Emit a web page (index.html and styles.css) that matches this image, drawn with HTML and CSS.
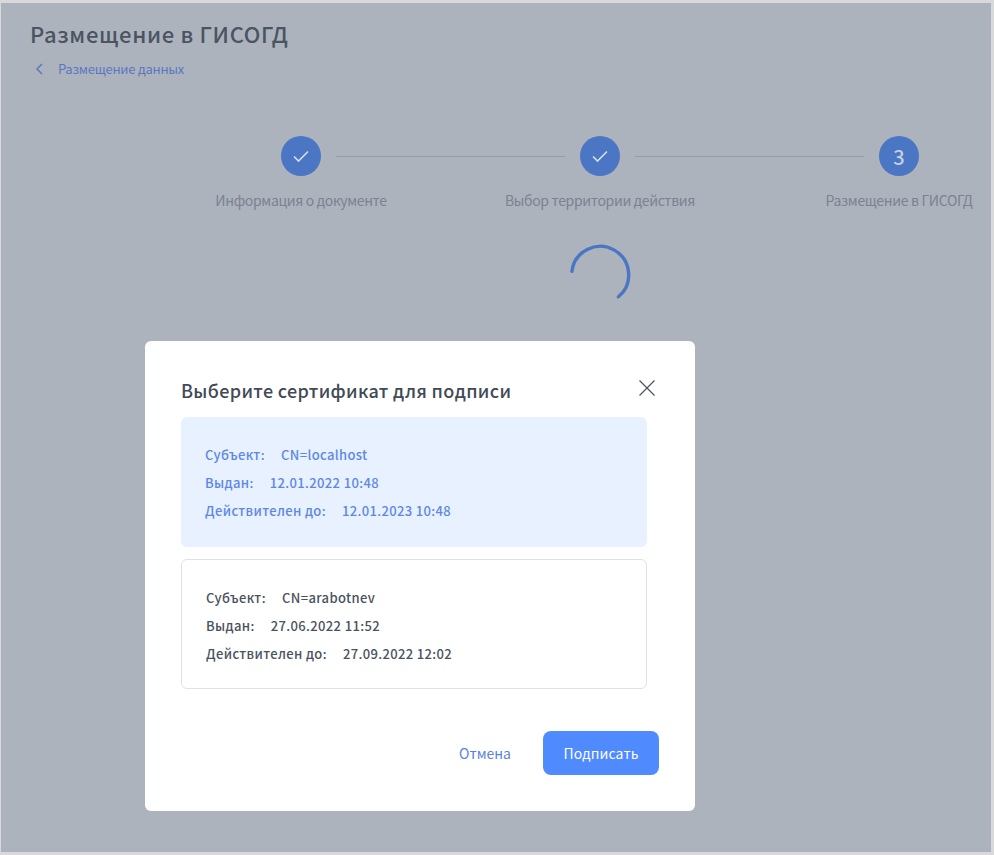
FILE: index.html
```html
<!DOCTYPE html>
<html lang="ru">
<head>
  <meta charset="UTF-8" />
  <meta name="viewport" content="width=device-width, initial-scale=1.0"/>
  <title>Размещение в ГИСОГД</title>
  <link rel="stylesheet" href="styles.css">
</head>
<body>

  <div class="page">
    <h1 class="page-title">Размещение в ГИСОГД</h1>
    <a class="back-link" href="#">
      <svg class="back-icon" width="8" height="12" viewBox="0 0 8 12"><path d="M7 1 2 6l5 5" fill="none" stroke="currentColor" stroke-width="1.5"/></svg>
      Размещение данных
    </a>

    <!-- Stepper -->
    <div class="stepper">
      <div class="step">
        <div class="step-circle">
          <svg width="18" height="14" viewBox="0 0 18 14"><path d="M2 7.5 6.5 12 16 2.5" fill="none" stroke="#d5dcea" stroke-width="1.7"/></svg>
        </div>
        <div class="step-label">Информация о документе</div>
      </div>
      <div class="step-line"></div>
      <div class="step">
        <div class="step-circle">
          <svg width="18" height="14" viewBox="0 0 18 14"><path d="M2 7.5 6.5 12 16 2.5" fill="none" stroke="#d5dcea" stroke-width="1.7"/></svg>
        </div>
        <div class="step-label">Выбор территории действия</div>
      </div>
      <div class="step-line"></div>
      <div class="step">
        <div class="step-circle">3</div>
        <div class="step-label">Размещение в ГИСОГД</div>
      </div>
    </div>

    <div class="spinner">
      <svg width="64" height="64" viewBox="0 0 64 64"><path d="M3.9 28.4A28.5 28.5 0 1 1 50.4 53.8" fill="none" stroke="#4a76c4" stroke-width="3.4" stroke-linecap="round"/></svg>
    </div>

    <!-- Signature dialog -->
    <div class="modal">
      <div class="modal-header">
        <h2 class="modal-title">Выберите сертификат для подписи</h2>
        <svg class="modal-close" width="16" height="16" viewBox="0 0 16 16"><path d="M0.5 0.5l15 15M15.5 0.5l-15 15" fill="none" stroke="#4a5260" stroke-width="1.2"/></svg>
      </div>

      <div class="cert cert-selected">
        <div class="cert-row"><span>Субъект:</span><span>CN=localhost</span></div>
        <div class="cert-row"><span>Выдан:</span><span>12.01.2022 10:48</span></div>
        <div class="cert-row"><span>Действителен до:</span><span>12.01.2023 10:48</span></div>
      </div>

      <div class="cert">
        <div class="cert-row"><span>Субъект:</span><span>CN=arabotnev</span></div>
        <div class="cert-row"><span>Выдан:</span><span>27.06.2022 11:52</span></div>
        <div class="cert-row"><span>Действителен до:</span><span>27.09.2022 12:02</span></div>
      </div>

      <div class="modal-actions">
        <button class="btn-cancel" type="button">Отмена</button>
        <button class="btn-sign" type="button">Подписать</button>
      </div>
    </div>
  </div>

</body>
</html>
```

FILE: styles.css
```css
body {
  margin: 0;
  height: 855px;
  overflow: hidden;
  background-color: #d9d9d9;
  font-family: "Noto Sans CJK SC", "Noto Sans", sans-serif;
}

.page {
  position: relative;
  box-sizing: border-box;
  height: 849px;
  margin: 3px 3px 0 1px;
  padding: 17px 0 0 29px;
  background-color: #adb3bd;
  overflow: hidden;
}

.page-title {
  margin: 0;
  font-size: 22px;
  line-height: 27px;
  font-weight: 500;
  letter-spacing: 0.67px;
  color: #4a5462;
}

.back-link {
  display: flex;
  align-items: center;
  margin-top: 12px;
  font-size: 13px;
  line-height: 20px;
  letter-spacing: -0.25px;
  color: #5878c2;
  text-decoration: none;
}

.back-icon {
  margin: 0 15px 0 5px;
}

.stepper {
  display: flex;
  align-items: flex-start;
  margin: 57px 0 0 251px;
}

.step {
  display: flex;
  flex-direction: column;
  align-items: center;
  width: 40px;
}

.step-circle {
  display: flex;
  align-items: center;
  justify-content: center;
  flex: none;
  width: 40px;
  height: 40px;
  border-radius: 50%;
  background-color: #4a76c4;
  color: #c5cfe2;
  font-size: 20px;
  font-weight: 500;
}

.step-label {
  margin-top: 14px;
  font-size: 14px;
  line-height: 20px;
  letter-spacing: -0.33px;
  white-space: nowrap;
  color: #7a8294;
}

.step-line {
  flex: none;
  width: 229px;
  height: 1px;
  margin: 20px 15px 0;
  background-color: #979eab;
}

.spinner {
  display: flex;
  justify-content: center;
  width: 64px;
  margin: 33px 0 0 538px;
}

.modal {
  position: absolute;
  top: 338px;
  left: 144px;
  box-sizing: border-box;
  width: 550px;
  height: 470px;
  padding: 36px 36px 0;
  background: #fff;
  border-radius: 6px;
}

.modal-header {
  display: flex;
  align-items: center;
  justify-content: space-between;
  height: 28px;
  margin-bottom: 12px;
  padding-right: 4px;
}

.modal-title {
  margin: -3px 0 0;
  font-size: 18px;
  line-height: 28px;
  font-weight: 500;
  letter-spacing: 0.34px;
  color: #414a56;
}

.modal-close {
  margin-top: -7px;
}

.cert {
  box-sizing: border-box;
  width: 466px;
  height: 130px;
  margin-bottom: 12px;
  padding: 24px 24px 0;
  border: 1px solid #dfe2e6;
  border-radius: 6px;
  color: #4a5260;
}

.cert-selected {
  border: none;
  background-color: #e8f1ff;
  color: #5d87e8;
}

.cert-row {
  display: flex;
  gap: 16px;
  font-size: 13px;
  line-height: 28px;
  font-weight: 500;
  letter-spacing: 0.36px;
}

.modal-actions {
  display: flex;
  align-items: center;
  justify-content: flex-end;
  gap: 32px;
  margin-top: 42px;
}

.btn-cancel {
  padding: 0;
  border: none;
  background: none;
  font: inherit;
  font-size: 14px;
  color: #5d82d8;
  cursor: pointer;
}

.btn-sign {
  width: 116px;
  height: 44px;
  padding: 0;
  border: none;
  border-radius: 8px;
  background-color: #4f8bff;
  font: inherit;
  font-size: 14px;
  letter-spacing: 0.12px;
  color: #fff;
  cursor: pointer;
}
```
